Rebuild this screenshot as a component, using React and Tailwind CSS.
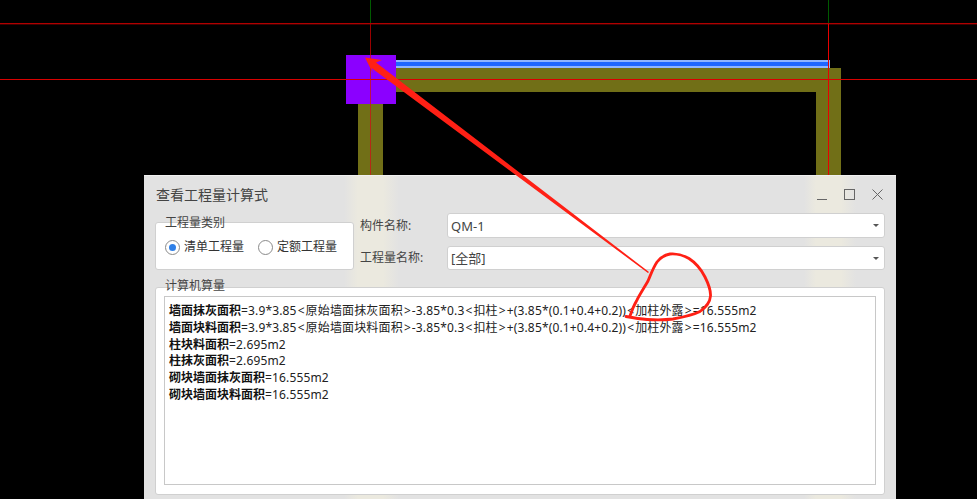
import React from 'react';

const FONT = "font-['Noto_Sans','Noto_Sans_CJK_SC',sans-serif]";

const lines = [
    { label: '墙面抹灰面积', value: '=3.9*3.85<原始墙面抹灰面积>-3.85*0.3<扣柱>+(3.85*(0.1+0.4+0.2))<加柱外露>=16.555m2' },
    { label: '墙面块料面积', value: '=3.9*3.85<原始墙面块料面积>-3.85*0.3<扣柱>+(3.85*(0.1+0.4+0.2))<加柱外露>=16.555m2' },
    { label: '柱块料面积', value: '=2.695m2' },
    { label: '柱抹灰面积', value: '=2.695m2' },
    { label: '砌块墙面抹灰面积', value: '=16.555m2' },
    { label: '砌块墙面块料面积', value: '=16.555m2' },
];

// angle brackets are set wider in the formula text
const Formula = ({ text }) => (
    <>
        {text.split(/([<>])/).map((part, i) => (
            part === '<' || part === '>'
                ? <span key={i} className="inline-block w-[9px] text-center">{part}</span>
                : <span key={i} className="tracking-[0.15px]">{part}</span>
        ))}
    </>
);

// CAD drawing behind the dialog
const CadCanvas = () => (
    <svg className="absolute inset-0" width="977" height="499" viewBox="0 0 977 499">
        <rect x="358" y="68" width="483" height="24" fill="#716f17" />
        <rect x="358" y="92" width="25" height="90" fill="#716f17" />
        <rect x="816" y="92" width="25" height="90" fill="#716f17" />
        <rect x="396" y="60" width="434" height="8" fill="#8fb4ff" />
        <rect x="396" y="62" width="433" height="4" fill="#1f66ff" />
        <rect x="346" y="55" width="50" height="49" fill="#8b00ff" />
        <rect x="370" y="0" width="1" height="24" fill="#005a00" />
        <rect x="828" y="0" width="1" height="24" fill="#005a00" />
        <rect x="0" y="23" width="977" height="1" fill="#b00000" />
        <rect x="0" y="24" width="977" height="1" fill="#400000" />
        <rect x="0" y="79" width="977" height="1" fill="#d80000" />
        <rect x="370" y="24" width="1" height="31" fill="#9a0000" />
        <rect x="370" y="55" width="1" height="127" fill="#c81818" fillOpacity="0.8" />
        <rect x="828" y="24" width="1" height="158" fill="#e80000" />
    </svg>
);

// red arrow and hand circled mark on top of everything
const Annotation = () => (
    <svg className="absolute inset-0 pointer-events-none" width="977" height="499" viewBox="0 0 977 499">
        <path d="M365 57.5 L382 60 L376 62.5 L649 272 L648 273 L371.5 68 L373 73.5 Z" fill="#ff2015" />
        <path
            d="M626 316.5 C634 318 640 319 647 319.5 C656 320 665 320 673 319 C684 317 693 315 700 311.5 C706 307 710 303 710.5 296 C711 289 708 283 705 277 C701 269 696 263 689 258.5 C683 255 676 253.5 670 254 C664 255 660 258 657 262 C653 268 651 274 648 281 C644 288 640 294 637 300 C634 305 632 310 630 316"
            fill="none"
            stroke="#ff2015"
            strokeWidth="2.8"
            strokeLinecap="round"
        />
    </svg>
);

const WindowControls = () => (
    <div className="flex items-center gap-[17px] pr-[2px]">
        <svg width="10" height="11" viewBox="0 0 10 11"><path d="M0 10.5H10" stroke="#666" /></svg>
        <svg width="11" height="11" viewBox="0 0 11 11"><rect x="0.5" y="0.5" width="10" height="10" fill="none" stroke="#666" /></svg>
        <svg width="11" height="11" viewBox="0 0 11 11"><path d="M0.5 0.5L10.5 10.5M10.5 0.5L0.5 10.5" stroke="#666" /></svg>
    </div>
);

const Radio = ({ label, checked }) => (
    <div className="flex items-center gap-[4px]">
        <span className="flex h-[15px] w-[15px] items-center justify-center rounded-full border border-[#8a8a8a] bg-white">
            {checked && <span className="h-[7px] w-[7px] rounded-full bg-[#2f80e8]" />}
        </span>
        <span className="-mt-px text-[12px] leading-[16px] text-[#333]">{label}</span>
    </div>
);

const SelectRow = ({ label, value, height }) => (
    <div className="flex items-center">
        <span className="w-[87px] text-[12px] leading-[16px] text-[#444]">{label}</span>
        <div className={`flex flex-1 items-center justify-between rounded-[3px] border border-[#d0d0d0] bg-white pl-[3px] pr-[5px] ${height}`}>
            <span className="text-[13px] leading-[16px] text-[#444]">{value}</span>
            <span className="h-0 w-0 border-x-[3px] border-t-[3px] border-x-transparent border-t-[#555]" />
        </div>
    </div>
);

const Dialog = () => (
    <div className="absolute left-[144px] top-[175px] flex h-[324px] w-[752px] flex-col border-t border-[#f0f0f0] bg-[linear-gradient(90deg,#e2e2e2_0,#e2e2e2_200px,#ebe9df_214px,#ebe9df_239px,#e2e2e2_255px,#e2e2e2_660px,#ebe9df_672px,#ebe9df_697px,#e2e2e2_712px)] px-[11px]">
        <div className="flex h-[37px] items-center justify-between">
            <span className="pl-px text-[14px] leading-[20px] text-[#444]">查看工程量计算式</span>
            <WindowControls />
        </div>

        <div className="flex h-[57px] items-end gap-[6px]">
            <div className="flex h-[48px] w-[199px] flex-col rounded-[3px] border border-[#d0d0d0] bg-white">
                <span className="-mt-[8px] ml-[9px] text-[12px] leading-[16px] text-[#444]">工程量类别</span>
                <div className="mt-[9px] flex gap-[14px] pl-[9px]">
                    <Radio label="清单工程量" checked />
                    <Radio label="定额工程量" />
                </div>
            </div>
            <div className="flex h-[57px] flex-1 flex-col gap-[8px]">
                <SelectRow label="构件名称:" value="QM-1" height="h-[25px]" />
                <SelectRow label="工程量名称:" value="[全部]" height="h-[24px]" />
            </div>
        </div>

        <div className="mt-[17px] flex h-[208px] flex-col rounded-[3px] border border-[#d0d0d0] bg-white">
            <span className="-mt-[10px] ml-[9px] text-[12px] leading-[16px] text-[#444]">计算机算量</span>
            <div className="mx-[8px] mt-[2px] h-[189px] border border-[#c8c8c8] bg-white px-[4px] pt-[6px]">
                {lines.map(line => (
                    <div key={line.label} className="h-[16.8px] text-[12px] leading-[16.8px] whitespace-nowrap text-[#222]">
                        <span className="font-bold text-[#111]">{line.label}</span>
                        <Formula text={line.value} />
                    </div>
                ))}
            </div>
        </div>
    </div>
);

export default function App() {
    return (
        <div className={`relative h-[499px] w-[977px] overflow-hidden bg-black ${FONT}`}>
            <CadCanvas />
            <Dialog />
            <Annotation />
        </div>
    );
}
